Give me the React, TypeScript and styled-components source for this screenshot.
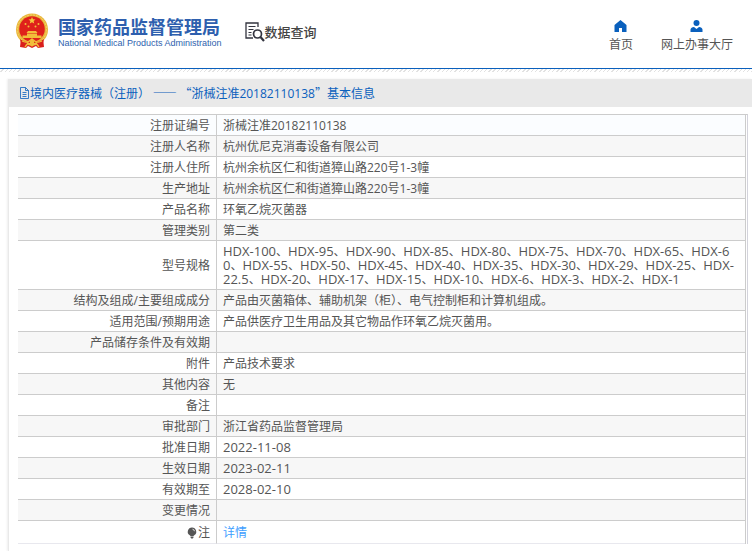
import React from "react";
import styled, { createGlobalStyle } from "styled-components";

const GlobalStyle = createGlobalStyle`
  *, *::before, *::after { box-sizing: border-box; }
  body {
    margin: 0;
    background: #fff;
    color: #555;
    font: 12px/14px "Open Sans", "Noto Sans CJK SC", sans-serif;
  }
  a { text-decoration: none; }
`;

const Header = styled.header`
  display: flex;
  align-items: center;
  height: 69px;
  padding: 0 19px 6px 15px;
  border-bottom: 1px solid #0a60bd;
`;

const Brand = styled.a`
  display: flex;
  align-items: center;
  gap: 9px;
  color: #2e5fae;
`;

const BrandText = styled.span`
  display: flex;
  flex-direction: column;
  padding-top: 2px;
`;

const BrandName = styled.strong`
  font: bold 18px/22px "Noto Sans CJK SC", sans-serif;
  white-space: nowrap;
`;

const BrandSubtitle = styled.span`
  font: 9px/12px "Liberation Sans", sans-serif;
  white-space: nowrap;
`;

const Section = styled.div`
  display: flex;
  align-items: center;
  margin-left: 23px;
  padding-top: 2px;
  color: #444;
  font-size: 13px;
  font-weight: 500;
  line-height: 20px;
  white-space: nowrap;
`;

const Nav = styled.nav`
  display: flex;
  gap: 28px;
  margin-left: auto;
  padding-top: 9px;
`;

const NavLink = styled.a`
  display: flex;
  flex-direction: column;
  align-items: center;
  gap: 6px;
  color: #555;
  white-space: nowrap;
`;

const Hatch = styled.div`
  height: 3px;
  background: repeating-linear-gradient(135deg, #fff 0 2px, #e2e2e2 2px 3px);
`;

const Panel = styled.main`
  margin: 7px 0 0 8px;
  padding-bottom: 7px;
  border-left: 1px solid #e9e9e9;
  box-shadow: -1px 0 2px #eee;
`;

const PanelTitle = styled.h1`
  display: flex;
  align-items: center;
  height: 28px;
  margin: 0;
  padding-left: 10px;
  background: #e9e9e9;
  color: #0a60bd;
  font: 12px/16px "Noto Sans CJK SC", sans-serif;
  white-space: pre;
`;

const Digits = styled.span`
  font-family: "Open Sans", sans-serif;
`;

const TableFrame = styled.div`
  margin: 7px 4px 0 9px;
  padding-right: 1px;
  border-top: 1px solid #ccc;
  border-right: 1px solid #d3d3dc;
`;

const Table = styled.table`
  width: 100%;
  border-spacing: 0;
  border-right: 1px solid #ccc;
  table-layout: fixed;
`;

const LabelColumn = styled.col`
  width: 199px;
`;

const Row = styled.tr`
  height: 21px;
  &:nth-child(even) { background: #f7f7f7; }
  &:first-child { background: #fbfdff; }
  &:last-child { height: 23px; }
  &:last-child > * { border-bottom-color: #e8e8ee; }
`;

const Label = styled.th`
  padding: 4px 6px 2px;
  border-right: 1px solid #ccc;
  border-bottom: 1px solid #ccc;
  font-weight: 400;
  text-align: right;
`;

const Value = styled.td`
  padding: 4px 10px 2px 6px;
  border-bottom: 1px solid #ccc;
  word-break: break-all;
`;

const Code = styled.span`
  font-size: 13px;
  line-height: 12px;
`;

const NoteLabel = styled.span`
  display: flex;
  align-items: center;
  justify-content: flex-end;
  gap: 1px;
`;

const DetailLink = styled.a`
  color: #409eff;
`;

const Emblem = () => (
  <svg width="34" height="36" viewBox="0 0 34 36" role="img" aria-label="国徽">
    <path d="M6 25 5 34l6 1 2-2 4 2 4-2 2 2 6-1-1-9z" fill="#d91f1c" />
    <circle cx="17" cy="16.5" r="16" fill="#e9b73c" />
    <circle cx="17" cy="16.5" r="14.5" fill="none" stroke="#f5d36a" strokeWidth="1" strokeDasharray="2 1" />
    <circle cx="17" cy="16" r="12.8" fill="#df201b" />
    <path d="m17 4 1 2.3 2.5.2-1.9 1.6.6 2.4L17 9.200l-2.200 1.300.600-2.400-1.900-1.600 2.500-.200z" fill="#f6c93e" />
    <g fill="#f2bd3a">
      <circle cx="10.500" cy="11" r="1" />
      <circle cx="13.500" cy="13.500" r="1" />
      <circle cx="20.500" cy="13.500" r="1" />
      <circle cx="23.500" cy="11" r="1" />
      <path d="M13 18h8l1.500 2h-11zM12 20.500h10v2H12zM7.500 22.500h19v2.500h-19z" />
    </g>
    <path d="M5 26c4 3 8 3 12 0 4 3 8 3 12 0l-1 4c-4 2-7 1-11-1-4 2-7 3-11 1z" fill="#d91f1c" />
    <path d="M7 28c4 2 7 1 10-2 3 3 6 4 10 2M10 34l3-4 4 3 4-3 3 4" fill="none" stroke="#f2bd3a" strokeWidth="1.3" />
    <circle cx="17" cy="29" r="2.300" fill="#f2bd3a" />
  </svg>
);

const SearchDocument = () => (
  <svg width="20" height="20" viewBox="0 0 20 20" fill="none" stroke="#33343f" aria-hidden="true">
    <path d="M13 5V1H1v15h7" strokeWidth="1.300" />
    <path d="M3.500 4.500h7M3.500 7.500h5M3.500 10.500h3M3.500 13h3" strokeWidth="1" />
    <circle cx="12.500" cy="12" r="4" strokeWidth="1.700" />
    <path d="m15.500 15 3.500 4" strokeWidth="2.200" />
  </svg>
);

const Home = () => (
  <svg width="13" height="12" viewBox="0 0 13 12" aria-hidden="true">
    <path d="M6.500 0 .5 5v7H5V8h3v4h4.500V5z" fill="#0a60bd" />
  </svg>
);

const Person = () => (
  <svg width="13" height="12" viewBox="0 0 13 12" aria-hidden="true">
    <circle cx="6.500" cy="3" r="3" fill="#0a60bd" />
    <path d="M.5 12V9.500Q1 7 4 7l2.500 2L9 7q3 0 3.500 2.500V12z" fill="#0a60bd" />
  </svg>
);

const Page = () => (
  <svg width="11" height="12" viewBox="0 0 11 12" fill="none" stroke="#0a60bd" aria-hidden="true">
    <path d="M1.500.5h5l3 3v8h-8zM6.500.5v3h3M3.500 5.500h4M3.500 7.500h4M3.500 9.500h4" strokeWidth=".8" />
  </svg>
);

const Bulb = () => (
  <svg width="10" height="12" viewBox="0 0 10 12" aria-hidden="true">
    <path d="M5 .5a4.200 4.200 0 0 0-2.500 7.600L3.500 9h3l1-.9A4.200 4.200 0 0 0 5 .5zM3.500 9.500h3v1L5.700 11.500H4.300l-.8-1z" fill="#555" />
    <path d="M5.500 2.200q1.800.3 2 2" stroke="#fff" strokeWidth=".8" fill="none" />
  </svg>
);

const numbers = [
  "100", "95", "90", "85", "80", "75", "70", "65", "60", "55", "50", "45", "40",
  "35", "30", "29", "25", "22.5", "20", "17", "15", "10", "6", "3", "2", "1",
];

const models = numbers.map((n, i) => (
  <React.Fragment key={n}>
    {i > 0 && "、"}
    <Code>{`HDX-${n}`}</Code>
  </React.Fragment>
));

const rows: [React.ReactNode, React.ReactNode][] = [
  ["注册证编号", "浙械注准20182110138"],
  ["注册人名称", "杭州优尼克消毒设备有限公司"],
  ["注册人住所", "杭州余杭区仁和街道獐山路220号1-3幢"],
  ["生产地址", "杭州余杭区仁和街道獐山路220号1-3幢"],
  ["产品名称", "环氧乙烷灭菌器"],
  ["管理类别", "第二类"],
  ["型号规格", models],
  ["结构及组成/主要组成成分", "产品由灭菌箱体、辅助机架（柜）、电气控制柜和计算机组成。"],
  ["适用范围/预期用途", "产品供医疗卫生用品及其它物品作环氧乙烷灭菌用。"],
  ["产品储存条件及有效期", ""],
  ["附件", "产品技术要求"],
  ["其他内容", "无"],
  ["备注", ""],
  ["审批部门", "浙江省药品监督管理局"],
  ["批准日期", <Code>2022-11-08</Code>],
  ["生效日期", <Code>2023-02-11</Code>],
  ["有效期至", <Code>2028-02-10</Code>],
  ["变更情况", ""],
  [<NoteLabel><Bulb />注</NoteLabel>, <DetailLink href="#detail">详情</DetailLink>],
];

export default function App() {
  return (
    <>
      <GlobalStyle />
      <Header lang="zh-CN">
        <Brand href="#home">
          <Emblem />
          <BrandText>
            <BrandName>国家药品监督管理局</BrandName>
            <BrandSubtitle>National Medical Products Administration</BrandSubtitle>
          </BrandText>
        </Brand>
        <Section>
          <SearchDocument />
          数据查询
        </Section>
        <Nav>
          <NavLink href="#home"><Home />首页</NavLink>
          <NavLink href="#services"><Person />网上办事大厅</NavLink>
        </Nav>
      </Header>
      <Hatch />
      <Panel lang="zh-CN">
        <PanelTitle>
          <Page />
          <span>境内医疗器械（注册） —— “浙械注准<Digits>20182110138</Digits>”基本信息</span>
        </PanelTitle>
        <TableFrame>
          <Table>
            <colgroup><LabelColumn /><col /></colgroup>
            <tbody>
              {rows.map(([label, value], i) => (
                <Row key={i}>
                  <Label scope="row">{label}</Label>
                  <Value>{value}</Value>
                </Row>
              ))}
            </tbody>
          </Table>
        </TableFrame>
      </Panel>
    </>
  );
}
